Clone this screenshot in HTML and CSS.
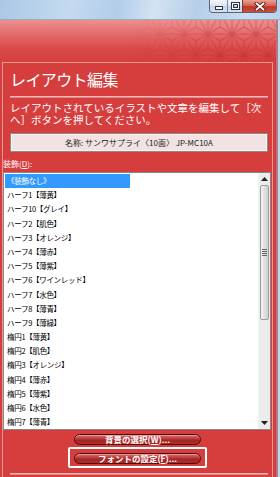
FILE: index.html
```html
<!DOCTYPE html>
<html lang="ja">
<head>
<meta charset="utf-8">
<title>レイアウト編集</title>
<link rel="stylesheet" href="styles.css">
</head>
<body>
<div class="window">
  <div class="titlebar">
    <div class="caption">
      <span class="cb min"><svg width="8" height="4" viewBox="0 0 8 4"><rect x="0.5" y="0.5" width="7" height="3" fill="#fff" stroke="#2b3442"/></svg></span>
      <span class="cb max"><svg width="9" height="8" viewBox="0 0 9 8"><rect x="0.5" y="0.5" width="8" height="7" fill="#fff" stroke="#2b3442"/><rect x="2.5" y="2.5" width="4" height="3" fill="#c9d6e5" stroke="#2b3442"/></svg></span>
      <span class="cb close"><svg width="12" height="9" viewBox="0 0 12 9"><path d="M2.5 1.5L9.5 7.5M9.5 1.5L2.5 7.5" stroke="#5b1910" stroke-width="3.6" stroke-linecap="square"/><path d="M2.5 1.5L9.5 7.5M9.5 1.5L2.5 7.5" stroke="#fff" stroke-width="1.8" stroke-linecap="square"/></svg></span>
    </div>
  </div>
  <div class="client">
    <div class="main">
      <div class="header">
        <svg class="asanoha" width="276" height="42" viewBox="0 0 276 42">
          <defs>
            <pattern id="asa" width="24" height="41.57" patternUnits="userSpaceOnUse" x="16" y="14">
              <path d="M0 0H24M0 20.785H24M0 41.57H24M0 0L12 20.785L24 0M0 41.57L12 20.785L24 41.57M12 6.928L0 0M12 6.928L24 0M12 6.928V20.785M0 13.856V0M0 13.856L12 20.785M0 13.856L-12 20.785M24 13.856V0M24 13.856L12 20.785M24 13.856L36 20.785M0 27.71V41.57M0 27.71L12 20.785M0 27.71L-12 20.785M24 27.71V41.57M24 27.71L12 20.785M24 27.71L36 20.785M12 34.64V20.785M12 34.64L0 41.57M12 34.64L24 41.57" fill="none" stroke="rgba(185,40,40,0.38)" stroke-width="1"/>
            </pattern>
          </defs>
          <rect width="276" height="42" fill="url(#asa)"/>
        </svg>
      </div>
      <div class="panel">
        <h1 class="title">レイアウト編集</h1>
        <div class="rule"></div>
        <p class="desc">レイアウトされているイラストや文章を編集して［次<br>へ］ボタンを押してください。</p>
        <div class="namebox">名称: サンワサプライ〈10面〉 JP-MC10A</div>
        <div class="label">装飾(<u>D</u>):</div>
        <div class="listbox">
          <ul class="items">
            <li class="item selected">《装飾なし》</li>
            <li class="item">ハーフ1【薄黄】</li>
            <li class="item">ハーフ10【グレイ】</li>
            <li class="item">ハーフ2【肌色】</li>
            <li class="item">ハーフ3【オレンジ】</li>
            <li class="item">ハーフ4【薄赤】</li>
            <li class="item">ハーフ5【薄紫】</li>
            <li class="item">ハーフ6【ワインレッド】</li>
            <li class="item">ハーフ7【水色】</li>
            <li class="item">ハーフ8【薄青】</li>
            <li class="item">ハーフ9【薄緑】</li>
            <li class="item">楕円1【薄黄】</li>
            <li class="item">楕円2【肌色】</li>
            <li class="item">楕円3【オレンジ】</li>
            <li class="item">楕円4【薄赤】</li>
            <li class="item">楕円5【薄紫】</li>
            <li class="item">楕円6【水色】</li>
            <li class="item">楕円7【薄青】</li>
          </ul>
          <div class="scrollbar">
            <div class="sb-arrow"><svg width="7" height="4" viewBox="0 0 7 4"><path d="M0 4L3.5 0L7 4Z" fill="#222"/></svg></div>
            <div class="sb-thumb"><svg width="5" height="7" viewBox="0 0 5 7"><path d="M0 0.5H5M0 2.5H5M0 4.5H5M0 6.5H5" stroke="#666" stroke-width="1"/></svg></div>
            <div class="sb-track"></div>
            <div class="sb-arrow"><svg width="7" height="4" viewBox="0 0 7 4"><path d="M0 0L3.5 4L7 0Z" fill="#222"/></svg></div>
          </div>
        </div>
        <div class="buttons">
          <button class="btn">背景の選択(<u>W</u>)...</button>
          <div class="focusframe"><button class="btn">フォントの設定(<u>F</u>)...</button></div>
        </div>
        <div class="rule bottom"></div>
      </div>
    </div>
    <div class="frame-right"></div>
  </div>
</div>
</body>
</html>
```
FILE: styles.css
```css
html, body {
  margin: 0;
  padding: 0;
}
body {
  width: 280px;
  height: 477px;
  overflow: hidden;
  background: #d63d3d;
  font-family: "Noto Sans CJK JP", "Noto Sans", sans-serif;
}
.window {
  display: flex;
  flex-direction: column;
  height: 477px;
}
.titlebar {
  height: 19px;
  flex: none;
  display: flex;
  justify-content: flex-end;
  align-items: flex-start;
  padding-right: 3px;
  background: linear-gradient(100deg, #aac8e6 0%, #c4daef 25%, #b2cde9 42%, #d3e3f3 55%, #b6cfe9 70%, #cadcf0 88%, #bcd3eb 100%);
}
.caption {
  display: flex;
  flex: none;
  height: 12px;
  border: 1px solid #56667c;
  border-top: none;
  border-radius: 0 0 4px 4px;
  overflow: hidden;
}
.cb {
  display: flex;
  flex: none;
  align-items: center;
  justify-content: center;
  height: 12px;
}
.cb.min {
  width: 18px;
  align-items: flex-end;
  padding-bottom: 2px;
  box-sizing: border-box;
  background: linear-gradient(#f2f6fb, #dbe5f0 50%, #c6d5e6 51%, #d4e0ee);
  border-right: 1px solid #7b8ca3;
}
.cb.max {
  width: 14px;
  background: linear-gradient(#f2f6fb, #dbe5f0 50%, #c6d5e6 51%, #d4e0ee);
  border-right: 1px solid #6e3a36;
}
.cb.close {
  width: 33px;
  background: linear-gradient(#e8a093, #d4695a 45%, #c0372a 55%, #cf4d3b);
}
.client {
  flex: 1;
  display: flex;
  border-top: 1px solid #9aabbf;
}
.main {
  width: 276px;
  display: flex;
  flex-direction: column;
}
.frame-right {
  width: 4px;
  background: linear-gradient(to right, #e06464 0 1px, #7e90a8 1px 2px, #c3d7ec 2px);
}
.header {
  height: 42px;
  flex: none;
  background: linear-gradient(#ec9090, #e26464 40%, #d94848 70%, #d63e3e);
}
.asanoha {
  display: block;
  -webkit-mask-image: linear-gradient(to right, transparent 48%, #000 80%);
  mask-image: linear-gradient(to right, transparent 48%, #000 80%);
}
.panel {
  flex: 1;
  margin: 0 3px 0 2px;
  border: 1px solid #ea9796;
  border-bottom: none;
  display: flex;
  flex-direction: column;
}
.title {
  margin: 5px 0 0 7px;
  font-size: 16px;
  line-height: 22px;
  font-weight: normal;
  color: #fff;
  letter-spacing: -0.6px;
}
.rule {
  height: 2px;
  margin: 6px 4px 0 7px;
  background: linear-gradient(#f4b9b9 0 1px, #e88686 1px);
  flex: none;
}
.rule.bottom {
  margin-top: 5px;
}
.desc {
  margin: 4px 4px 0 7px;
  font-family: "Liberation Sans", "Noto Sans CJK JP", sans-serif;
  font-size: 10.5px;
  line-height: 12px;
  color: #fff;
  white-space: nowrap;
}
.namebox {
  margin: 7px 4px 0 7px;
  height: 19px;
  box-sizing: border-box;
  border: 1px solid #8b8b8b;
  background: #f2e2e2;
  box-shadow: inset 0 0 0 1px #fbf3f3;
  text-align: center;
  font-size: 8px;
  line-height: 17px;
  color: #222;
}
.label {
  margin-top: 6px;
  font-size: 8px;
  line-height: 12px;
  color: #fff;
}
.listbox {
  margin-top: 2px;
  height: 258px;
  width: 268px;
  box-sizing: border-box;
  border: 1px solid #828790;
  background: #fff;
  display: flex;
  flex: none;
  overflow: hidden;
}
.items {
  flex: 1;
  list-style: none;
  margin: 0;
  padding: 1px 0 0 0;
  overflow: hidden;
}
.item {
  height: 14.2px;
  line-height: 14.2px;
  padding-left: 2px;
  margin-left: 1px;
  font-size: 7.5px;
  letter-spacing: -0.3px;
  color: #000;
  white-space: nowrap;
}
.item.selected {
  width: 125px;
  box-sizing: border-box;
  background: #3399ff;
  color: #fff;
}
.scrollbar {
  width: 11px;
  flex: none;
  display: flex;
  flex-direction: column;
  background: #ececec;
  border-left: 1px solid #f4f4f4;
}
.sb-arrow {
  height: 12px;
  flex: none;
  display: flex;
  align-items: center;
  justify-content: center;
}
.sb-thumb {
  height: 133px;
  flex: none;
  margin: 0 1px;
  border: 1px solid #9b9b9b;
  border-radius: 2px;
  background: linear-gradient(to right, #f3f3f3, #e0e0e0 50%, #d0d0d0);
  display: flex;
  align-items: center;
  justify-content: center;
}
.sb-track {
  flex: 1;
}
.buttons {
  display: flex;
  flex-direction: column;
  align-items: center;
  margin-top: 4px;
}
.btn {
  width: 127px;
  height: 11px;
  box-sizing: border-box;
  padding: 0;
  border: 1px solid #4d0c0c;
  border-radius: 6px;
  background: linear-gradient(#d66c6c, #ba3838 45%, #a42424 55%, #b02c2c);
  box-shadow: inset 0 1px 0 rgba(255, 200, 200, 0.5);
  color: #fff;
  font-family: "Noto Sans CJK JP", "Noto Sans", sans-serif;
  font-size: 8.5px;
  font-weight: bold;
  line-height: 9px;
}
.btn u {
  text-decoration-thickness: 1px;
}
.focusframe {
  margin-top: 2px;
  border: 2px solid #fff;
  border-radius: 2px;
  padding: 4px 4px 2px 4px;
  display: flex;
}
```
